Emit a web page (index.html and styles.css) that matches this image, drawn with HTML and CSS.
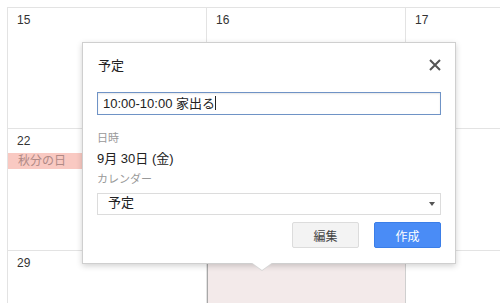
FILE: index.html
```html
<!DOCTYPE html>
<html lang="ja">
<head>
  <meta charset="UTF-8" />
  <meta name="viewport" content="width=device-width, initial-scale=1.0" />
  <title>カレンダー</title>
  <link rel="stylesheet" href="styles.css">
</head>
<body>
  <div class="month">
    <div class="cell"><span class="day">15</span></div>
    <div class="cell"><span class="day">16</span></div>
    <div class="cell last"><span class="day">17</span></div>

    <div class="cell">
      <span class="day">22</span>
      <div class="holiday">秋分の日</div>
    </div>
    <div class="cell"></div>
    <div class="cell last"></div>

    <div class="cell"><span class="day">29</span></div>
    <div class="cell selected"></div>
    <div class="cell last"></div>
  </div>

  <div class="bubble">
    <div class="bubble-head">
      <span class="bubble-title">予定</span>
      <svg class="close" width="12" height="12" viewBox="0 0 12 12">
        <path d="M1 1 L11 11 M11 1 L1 11" stroke="#555" stroke-width="2" fill="none" />
      </svg>
    </div>

    <div class="title-field">10:00-10:00 家出る<span class="caret"></span></div>

    <div class="label first">日時</div>
    <div class="when">9月 30日 (金)</div>

    <div class="label">カレンダー</div>
    <div class="select">
      <span class="select-value">予定</span>
      <span class="select-arrow"></span>
    </div>

    <div class="actions">
      <button class="btn">編集</button>
      <button class="btn primary">作成</button>
    </div>
  </div>
</body>
</html>
```

FILE: styles.css
```css
body {
  margin: 0;
  padding: 0;
  font-family: "Liberation Sans", Arial, "Noto Sans CJK JP", sans-serif;
  color: #333;
  background: #fff;
  width: 500px;
  height: 303px;
  overflow: hidden;
}

.month {
  margin: 7px 0 0 7px;
  border-top: 1px solid #e3e3e3;
  border-left: 1px solid #e3e3e3;
  display: grid;
  grid-template-columns: 199px 199px 1fr;
  grid-template-rows: 121px 122px 60px;
}

.cell {
  border-right: 1px solid #e3e3e3;
  border-bottom: 1px solid #e3e3e3;
  font-size: 12px;
}

.cell.last {
  border-right: none;
}

.cell.selected {
  background: #f3eaea;
  box-shadow: inset 1px 0 0 #a8a8a8;
  border-right-color: #cfcfcf;
}

.day {
  display: block;
  padding: 5px 0 0 9px;
  line-height: 14px;
}

.holiday {
  margin-top: 5px;
  height: 16px;
  line-height: 16px;
  padding-left: 10px;
  background: #f9c9c2;
  color: #b08a86;
  font-size: 12px;
}

/* popup over the grid */
.bubble {
  position: absolute;
  left: 82px;
  top: 42px;
  width: 344px;
  padding: 15px 14px 15px 14px;
  background: #fff;
  border: 1px solid #cfcfcf;
  box-shadow: 0 2px 6px rgba(0, 0, 0, 0.18);
}

.bubble::before,
.bubble::after {
  content: "";
  position: absolute;
  left: 168px;
  border-left: 11px solid transparent;
  border-right: 11px solid transparent;
}

.bubble::before {
  bottom: -8px;
  border-top: 8px solid #d6d6d6;
}

.bubble::after {
  bottom: -7px;
  border-top: 8px solid #fff;
}

.bubble-head {
  display: flex;
  justify-content: space-between;
  align-items: center;
  height: 16px;
  padding-left: 1px;
}

.bubble-title {
  font-size: 13px;
  color: #222;
  line-height: 16px;
}

.close {
  margin-top: -3px;
}

.title-field {
  margin-top: 18px;
  height: 21px;
  line-height: 21px;
  border: 1px solid #6f93c6;
  box-shadow: inset 0 1px 2px rgba(0, 0, 0, 0.1);
  padding-left: 5px;
  font-size: 13px;
  color: #222;
}

.caret {
  display: inline-block;
  width: 1px;
  height: 14px;
  background: #222;
  vertical-align: -2px;
}

.label {
  margin-top: 5px;
  font-size: 11px;
  line-height: 14px;
  color: #999;
}

.label.first {
  margin-top: 16px;
}

.when {
  margin-top: 6px;
  font-size: 13px;
  line-height: 16px;
  color: #222;
}

.select {
  margin-top: 7px;
  height: 20px;
  border: 1px solid #dcdcdc;
  display: flex;
  justify-content: space-between;
  align-items: center;
  padding: 0 5px 0 10px;
  font-size: 13px;
  color: #222;
}

.select-value {
  line-height: 16px;
  margin-top: -3px;
}

.select-arrow {
  width: 0;
  height: 0;
  border-left: 3px solid transparent;
  border-right: 3px solid transparent;
  border-top: 4px solid #555;
}

.actions {
  margin-top: 7px;
  display: flex;
  justify-content: flex-end;
  gap: 15px;
}

.btn {
  width: 67px;
  height: 26px;
  font-family: inherit;
  font-size: 12px;
  color: #444;
  background: #f3f3f3;
  border: 1px solid #dcdcdc;
  border-radius: 2px;
  padding: 0;
}

.btn.primary {
  color: #fff;
  background: #4a8cf6;
  border-color: #3b7ee8;
}
```
